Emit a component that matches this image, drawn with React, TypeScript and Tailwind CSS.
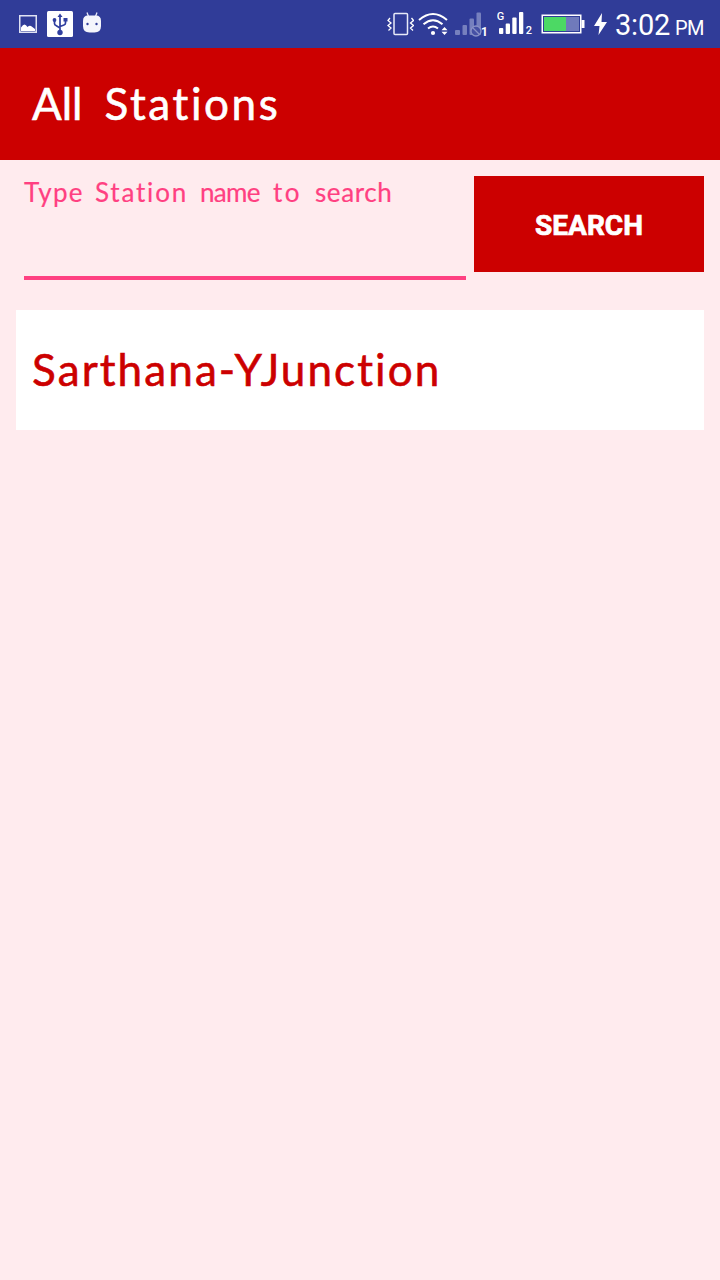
import type { ReactNode } from "react";

function Icon({ width, className, children }: { width: number; className?: string; children: ReactNode }) {
  return (
    <svg width={width} height={48} viewBox={`0 0 ${width} 48`} fill="none" className={`shrink-0 ${className ?? ""}`}>
      {children}
    </svg>
  );
}

function PictureIcon() {
  return (
    <Icon width={18} className="ml-[19px]">
      <rect x="0.75" y="15.75" width="16.5" height="16.5" stroke="#dfe2f3" strokeWidth="1.5" />
      <path d="M2 31V27.500q2-3 3.500-3t3 2.500q2-2 3.500-1l4 3v2z" fill="white" />
    </Icon>
  );
}

function UsbIcon() {
  return (
    <Icon width={26} className="ml-[10px]">
      <rect y="11" width="26" height="26" rx="1.5" fill="white" />
      <path d="M13 16v16M7.5 20v3.5q0 1.5 1.5 2l4 2.5M18.500 20v3q0 1.500-1.500 2l-4 1.500" stroke="#303f9f" strokeWidth="1.7" />
      <path d="M13 13.500l2.500 3.500h-5z" fill="#303f9f" />
      <circle cx="13" cy="32.500" r="2.700" fill="#303f9f" />
      <circle cx="7.500" cy="20" r="1.900" fill="#303f9f" />
      <rect x="16.500" y="18" width="4" height="3.500" fill="#303f9f" />
    </Icon>
  );
}

function AndroidIcon() {
  return (
    <Icon width={20} className="ml-[9px]">
      <path d="M5 12.500l1.500 4M15 12.500l-1.500 4" stroke="#e8eaf8" strokeWidth="1.300" />
      <path d="M1 21q0-5.500 5-5.500h8q5 0 5 5.500v5q0 6.500-6.500 6.500h-5Q1 32.500 1 26z" fill="#f4f5fc" />
      <circle cx="5.500" cy="24" r="1.200" fill="#303c98" />
      <circle cx="14.500" cy="24" r="1.200" fill="#303c98" />
    </Icon>
  );
}

function VibrateIcon() {
  return (
    <Icon width={27} className="ml-auto">
      <rect x="7" y="13.500" width="13.500" height="21" rx="1" stroke="#e8eaf8" strokeWidth="1.500" />
      <path d="M3 18L1 20.500l3 2.500-3 2.500 3 2.500-2.500 2.500M24.500 18l2 2.500-3 2.500 3 2.500-3 2.500 2.500 2.500" stroke="white" strokeWidth="1.300" />
    </Icon>
  );
}

function WifiIcon() {
  return (
    <Icon width={31} className="ml-[4px]">
      <path d="M1 20q14-12 28 0M5.500 24.300q9.500-8 19 0M10 28.500q5-4 10 0" stroke="white" strokeWidth="2" />
      <circle cx="15" cy="33" r="2.100" fill="white" />
      <path d="M23.500 30.300l3-3.300 3 3.300zM23.500 31.700l3 3.300 3-3.300z" fill="white" />
    </Icon>
  );
}

function WeakSignalIcon() {
  return (
    <Icon width={33} className="ml-[6px]">
      <g fill="#7680be">
        <rect x="0" y="30" width="5" height="5" rx="1" />
        <rect x="7.500" y="25" width="4.500" height="10" rx="1" />
        <rect x="14.500" y="18.500" width="4.500" height="16.500" rx="1" />
        <rect x="21.500" y="12.500" width="4.500" height="22.500" rx="1" />
      </g>
      <circle cx="21" cy="31" r="5" fill="#4650a4" stroke="#8991c7" strokeWidth="1.300" />
      <path d="M17.500 27.500l7 7" stroke="#8991c7" strokeWidth="1.300" />
      <text x="26" y="36" fill="white" fontFamily="Roboto, sans-serif" fontSize="12" fontWeight="700">1</text>
    </Icon>
  );
}

function SignalIcon() {
  return (
    <Icon width={36} className="ml-[9px]">
      <text x="-0.300" y="20" fill="white" fontFamily="Roboto, sans-serif" fontSize="11" fontWeight="500">G</text>
      <g fill="white">
        <rect x="2" y="28" width="4.300" height="6" rx="1" />
        <rect x="8.700" y="23.500" width="4.300" height="10.500" rx="1" />
        <rect x="15.300" y="17.500" width="4.300" height="16.500" rx="1" />
        <rect x="22" y="12" width="4.300" height="22" rx="1" />
      </g>
      <text x="28.800" y="34" fill="white" fontFamily="Roboto, sans-serif" fontSize="11" fontWeight="500">2</text>
    </Icon>
  );
}

function BatteryIcon() {
  return (
    <Icon width={44} className="ml-[8px]">
      <rect x="1.250" y="15.250" width="38.500" height="17.500" stroke="white" strokeWidth="1.500" />
      <rect x="3" y="17" width="22" height="14" fill="#4cd964" />
      <rect x="25" y="17" width="13" height="14" fill="#707abb" />
      <rect x="40.500" y="20" width="3" height="8" fill="white" />
    </Icon>
  );
}

function BoltIcon() {
  return (
    <Icon width={15} className="ml-[8px]">
      <path d="M9 13L1 26h5.500L5.500 35 14 22H8.500z" fill="white" />
    </Icon>
  );
}

function StatusBar() {
  return (
    <div className="flex h-12 items-center bg-[#303c98] pr-4 text-white">
      <PictureIcon />
      <UsbIcon />
      <AndroidIcon />
      <VibrateIcon />
      <WifiIcon />
      <WeakSignalIcon />
      <SignalIcon />
      <BatteryIcon />
      <BoltIcon />
      <div className="ml-[7px] flex h-12 w-[89px] items-baseline justify-between pt-[2px] font-[Roboto,sans-serif] leading-[46px] whitespace-nowrap">
        <span className="text-[29px] tracking-[-0.2px]">3:02</span>
        <span className="text-[20px] tracking-[-0.5px]">PM</span>
      </div>
    </div>
  );
}

const stations = ["Sarthana-YJunction"];

export default function App() {
  return (
    <div className="flex min-h-screen w-full flex-col bg-[#ffebee]">
      <StatusBar />
      <header className="flex h-28 items-center bg-[#cc0000] px-8 pb-[2px]">
        <h1 className="flex gap-[22px] font-[Lato,sans-serif] text-[44px] leading-none text-white [-webkit-text-stroke:0.6px_#ffffff]">
          <span>All</span>
          <span className="tracking-[2.600px]">Stations</span>
        </h1>
      </header>
      <main className="flex flex-col px-4 pt-4">
        <form className="flex items-start gap-2">
          <label className="ml-2 flex h-[104px] w-[442px] flex-col border-b-4 border-[#ff4081] font-[Lato,sans-serif] text-[26px] leading-8 whitespace-nowrap text-[#ff4081]">
            <span className="flex [-webkit-text-stroke:0.2px_#ff4081]">
              <span className="w-[71px] tracking-[1.200px]">Type </span>
              <span className="w-[105px] tracking-[1.800px]">Station </span>
              <span className="w-[73px] tracking-[-0.700px]">name </span>
              <span className="w-[42px] tracking-[2.500px]">to </span>
              <span className="tracking-[0.600px]">search</span>
            </span>
            <input aria-label="Station name" className="w-full bg-transparent outline-none" />
          </label>
          <button type="button" className="h-24 w-[230px] bg-[#cc0000] pt-[3px] font-[Roboto,sans-serif] text-[28px] font-bold text-white [-webkit-text-stroke:0.7px_#ffffff]">
            SEARCH
          </button>
        </form>
        <ul className="mt-[30px]">
          {stations.map((name) => (
            <li key={name} className="flex h-[120px] items-center bg-white px-4 pb-[2px] font-[Lato,sans-serif] text-[44px] leading-none tracking-[2.100px] text-[#cc0000] [-webkit-text-stroke:0.6px_#cc0000]">
              {name}
            </li>
          ))}
        </ul>
      </main>
    </div>
  );
}
